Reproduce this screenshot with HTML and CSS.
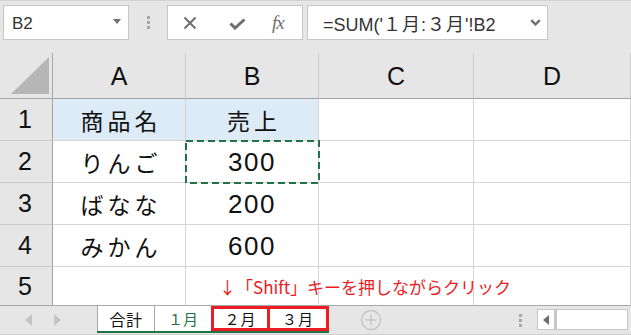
FILE: index.html
```html
<!DOCTYPE html>
<html lang="ja">
<head>
<meta charset="utf-8">
<link rel="stylesheet" href="styles.css">
</head>
<body>
<div class="app">
  <div class="topbar">
    <div class="namebox">
      <span class="nb-text">B2</span>
      <svg class="nb-arrow" width="8" height="5" viewBox="0 0 8 5"><path d="M0 0H8L4 5Z" fill="#707070"/></svg>
    </div>
    <div class="vsep"><i></i><i></i><i></i></div>
    <div class="fxbox">
      <svg class="ic-x" width="14" height="14" viewBox="0 0 14 14"><path d="M1.5 1.5L12.5 12.5M12.5 1.5L1.5 12.5" stroke="#6e6e6e" stroke-width="2" fill="none"/></svg>
      <svg class="ic-ok" width="17" height="12" viewBox="0 0 17 12"><path d="M1.5 5.5L6 10L15.5 1.5" stroke="#6e6e6e" stroke-width="3" fill="none"/></svg>
      <span class="ic-fx">fx</span>
    </div>
    <div class="formula">
      <span class="f-text">=SUM('<span class="fw">１月:３月</span>'!B2</span>
      <svg class="f-chev" width="11" height="7" viewBox="0 0 11 7"><path d="M1.2 1.2L5.5 5.4L9.8 1.2" stroke="#707070" stroke-width="2.4" fill="none"/></svg>
    </div>
  </div>

  <div class="grid">
    <div class="corner"><span class="tri"></span></div>
    <div class="ch">A</div>
    <div class="ch">B</div>
    <div class="ch">C</div>
    <div class="ch">D</div>

    <div class="rh">1</div>
    <div class="c jp sel">商品名</div>
    <div class="c jp sel">売上</div>
    <div class="c"></div>
    <div class="c"></div>

    <div class="rh">2</div>
    <div class="c jp">りんご</div>
    <div class="c num ants">300
      <svg class="ants-svg" width="135" height="44" viewBox="0 0 135 44"><rect x="1" y="1" width="133" height="42" fill="none" stroke="#217346" stroke-width="2" stroke-dasharray="7 4"/></svg>
    </div>
    <div class="c"></div>
    <div class="c"></div>

    <div class="rh">3</div>
    <div class="c jp">ばなな</div>
    <div class="c num">200</div>
    <div class="c"></div>
    <div class="c"></div>

    <div class="rh">4</div>
    <div class="c jp">みかん</div>
    <div class="c num">600</div>
    <div class="c"></div>
    <div class="c"></div>

    <div class="rh last">5</div>
    <div class="c last"></div>
    <div class="c last"></div>
    <div class="c last"></div>
    <div class="c last"></div>
  </div>

  <div class="tabbar">
    <div class="nav">
      <svg width="8" height="12" viewBox="0 0 8 12"><path d="M7 0V12L0 6Z" fill="#c3c3c3"/></svg>
      <svg width="8" height="12" viewBox="0 0 8 12"><path d="M1 0V12L8 6Z" fill="#c3c3c3"/></svg>
    </div>
    <div class="tabs">
      <div class="tab t-sum">合計</div>
      <div class="tab t-1">１月</div>
      <div class="tab t-red">２月</div>
      <div class="tab t-red t-red2">３月</div>
    </div>
    <div class="addsheet">
      <svg width="22" height="22" viewBox="0 0 22 22"><circle cx="11" cy="11" r="9.5" stroke="#c6c6c6" stroke-width="1.5" fill="none"/><path d="M11 5.5V16.5M5.5 11H16.5" stroke="#c6c6c6" stroke-width="1.5"/></svg>
    </div>
    <div class="hsep"><i></i><i></i><i></i></div>
    <div class="hscroll">
      <div class="hs-btn"><svg width="7" height="10" viewBox="0 0 7 10"><path d="M6 0V10L0 5Z" fill="#6e6e6e"/></svg></div>
      <div class="hs-track"></div>
    </div>
  </div>

  <div class="note">↓「Shift」キーを押しながらクリック</div>
</div>
</body>
</html>
```

FILE: styles.css
```css
* { box-sizing: border-box; }
html, body { margin: 0; padding: 0; }
body {
  width: 631px;
  height: 335px;
  overflow: hidden;
  background: #e6e6e6;
  font-family: "Liberation Sans", "Noto Sans CJK JP", sans-serif;
}
.app {
  position: relative;
  width: 631px;
  height: 335px;
  background: #e6e6e6;
  display: flex;
  flex-direction: column;
}

/* ---------- top bar ---------- */
.topbar {
  height: 53px;
  flex: none;
  display: flex;
  align-items: flex-start;
  padding: 5px 0 0 3px;
  border-top: 1px solid #d2d2d2;
}
.topbar > * { flex: none; }
.namebox {
  width: 126px;
  height: 35px;
  margin-top: -1px;
  background: #fff;
  border: 1px solid #c6c6c6;
  display: flex;
  align-items: center;
  justify-content: space-between;
  padding: 0 7px 0 8px;
}
.nb-text {
  font-size: 17px;
  color: #333;
  padding-top: 2px;
}
.nb-arrow { margin-top: -3px; }
.vsep {
  width: 38px;
  height: 35px;
  display: flex;
  flex-direction: column;
  align-items: center;
  justify-content: center;
  gap: 2px;
  margin-top: -1px;
}
.vsep i, .hsep i {
  display: block;
  width: 3px;
  height: 3px;
  background: #a8a8a8;
}
.fxbox {
  width: 136px;
  height: 35px;
  margin-top: -1px;
  background: #fff;
  border: 1px solid #c6c6c6;
  display: flex;
  align-items: center;
  padding-left: 15px;
}
.ic-x { margin-right: 32px; }
.ic-ok { margin-right: 26px; margin-top: 2px; }
.ic-fx {
  font-family: "Liberation Serif", serif;
  font-style: italic;
  font-size: 19px;
  color: #6e6e6e;
  letter-spacing: -1px;
}
.formula {
  width: 241px;
  height: 35px;
  margin-top: -1px;
  margin-left: 4px;
  background: #fff;
  border: 1px solid #c6c6c6;
  display: flex;
  align-items: center;
  justify-content: space-between;
  padding: 0 6px 0 15px;
}
.f-text {
  font-size: 18px;
  color: #333;
  white-space: nowrap;
  padding-top: 1px;
}
.fw { letter-spacing: 1px; }

/* ---------- grid ---------- */
.grid {
  flex: none;
  display: grid;
  grid-template-columns: 53px 133px 133px 155px 157px;
  grid-template-rows: 46px 42px 42px 42px 42px 39px;
  background: #fff;
}
.corner {
  background: #e6e6e6;
  border-right: 1px solid #a8a8a8;
  border-bottom: 1px solid #a8a8a8;
  display: flex;
  align-items: flex-end;
  justify-content: flex-end;
  padding: 0 3px 4px 0;
}
.tri {
  width: 38px;
  height: 37px;
  background: #b6b6b6;
  clip-path: polygon(100% 0, 100% 100%, 0 100%);
}
.ch {
  background: #e6e6e6;
  border-right: 1px solid #cacaca;
  border-bottom: 1px solid #a3a3a3;
  display: flex;
  align-items: center;
  justify-content: center;
  font-size: 25px;
  color: #111;
  padding-top: 2px;
}
.rh {
  background: #e6e6e6;
  border-right: 1px solid #a3a3a3;
  border-bottom: 1px solid #cacaca;
  display: flex;
  align-items: center;
  justify-content: center;
  font-size: 25px;
  color: #111;
  padding-right: 2px;
}
.c {
  position: relative;
  border-right: 1px solid #d4d4d4;
  border-bottom: 1px solid #d4d4d4;
  display: flex;
  align-items: center;
  justify-content: center;
  color: #111;
}
.rh.last, .c.last { border-bottom: 1px solid #a8a8a8; }
.jp {
  font-family: "Noto Sans CJK JP", sans-serif;
  font-size: 23px;
  letter-spacing: 4px;
  padding-left: 4px;
}
.num {
  font-size: 26px;
  letter-spacing: 1.5px;
  padding-top: 1px;
}
.sel { background: #ddebf7; }
.ants-svg {
  position: absolute;
  left: -1px;
  top: -1px;
}

/* ---------- tab bar ---------- */
.tabbar {
  flex: none;
  height: 29px;
  display: flex;
  align-items: flex-start;
  border-bottom: 1px solid #d0d0d0;
}
.tabbar > * { flex: none; }
.nav {
  width: 97px;
  height: 27px;
  display: flex;
  align-items: center;
  gap: 20px;
  padding-left: 25px;
}
.tabs {
  display: flex;
  height: 27px;
  border-bottom: 2px solid #217346;
}
.tab {
  flex: none;
  height: 25px;
  background: #fff;
  display: flex;
  align-items: center;
  justify-content: center;
  font-family: "Noto Sans CJK JP", sans-serif;
  font-size: 15px;
  color: #111;
}
.t-sum {
  width: 58px;
  border-left: 1px solid #a8a8a8;
  border-right: 1px solid #a8a8a8;
  font-size: 16px;
  letter-spacing: 0.5px;
}
.t-1 {
  width: 56px;
  color: #217346;
}
.t-red {
  width: 59px;
  border: 3px solid #ec1c24;
  letter-spacing: 1px;
}
.t-red2 {
  width: 62px;
  margin-left: -3px;
}
.addsheet {
  width: 22px;
  height: 27px;
  margin-left: 31px;
  display: flex;
  align-items: center;
  justify-content: center;
  padding-top: 1px;
}
.hsep {
  width: 20px;
  margin-left: 128px;
  height: 27px;
  display: flex;
  flex-direction: column;
  align-items: center;
  justify-content: center;
  gap: 2px;
  padding-top: 2px;
}
.hscroll {
  margin-left: 7px;
  margin-top: 3px;
  width: 91px;
  height: 21px;
  display: flex;
  border: 1px solid #c6c6c6;
  background: #fff;
}
.hs-btn {
  width: 19px;
  height: 19px;
  display: flex;
  align-items: center;
  justify-content: center;
  border-right: 3px solid #c6c6c6;
}
.hs-track { flex: 1; background: #fff; }

/* ---------- annotation ---------- */
.note {
  position: absolute;
  left: 219px;
  top: 274px;
  font-family: "Noto Sans CJK JP", sans-serif;
  font-size: 17px;
  color: #ec1c24;
  white-space: nowrap;
}
```
